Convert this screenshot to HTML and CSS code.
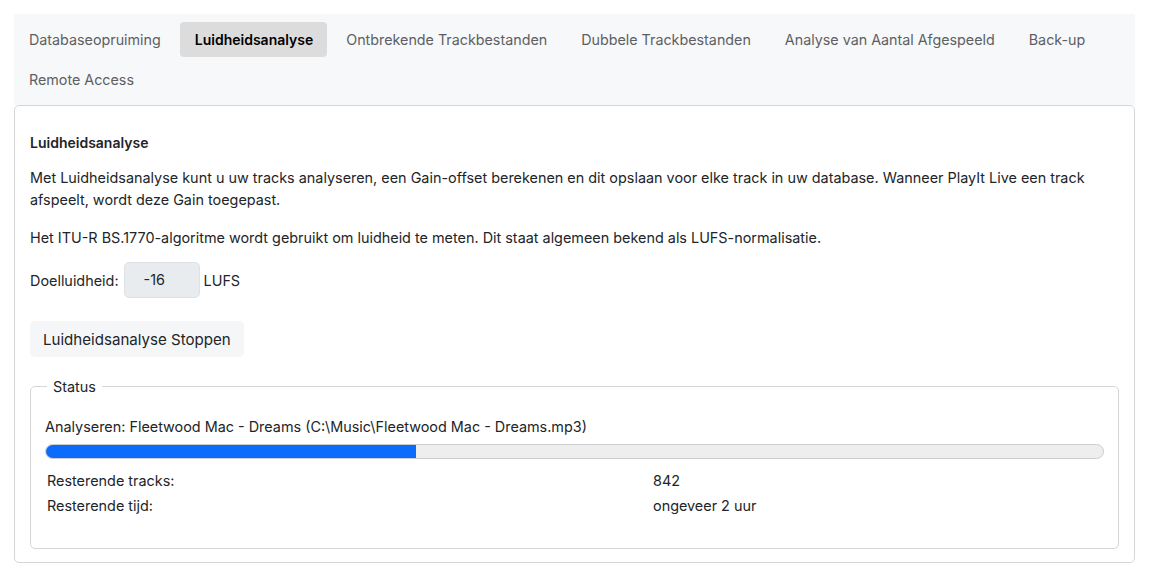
FILE: index.html
```html
<!DOCTYPE html>
<html lang="nl">
<head>
<meta charset="utf-8">
<title>Luidheidsanalyse</title>
<link rel="stylesheet" href="styles.css">
</head>
<body>
<div class="page">
  <nav class="tabs">
    <a class="tab">Databaseopruiming</a>
    <a class="tab active">Luidheidsanalyse</a>
    <a class="tab">Ontbrekende Trackbestanden</a>
    <a class="tab">Dubbele Trackbestanden</a>
    <a class="tab">Analyse van Aantal Afgespeeld</a>
    <a class="tab">Back-up</a>
    <a class="tab">Remote Access</a>
  </nav>
  <section class="card">
    <h2 class="title">Luidheidsanalyse</h2>
    <p class="text">Met Luidheidsanalyse kunt u uw tracks analyseren, een Gain-offset berekenen en dit opslaan voor elke track in uw database. Wanneer PlayIt Live een track afspeelt, wordt deze Gain toegepast.</p>
    <p class="text">Het ITU-R BS.1770-algoritme wordt gebruikt om luidheid te meten. Dit staat algemeen bekend als LUFS-normalisatie.</p>
    <div class="target">
      <label class="target-label">Doelluidheid:</label>
      <span class="input">-16</span>
      <span class="unit">LUFS</span>
    </div>
    <button class="btn">Luidheidsanalyse Stoppen</button>
    <fieldset class="status">
      <legend class="legend">Status</legend>
      <div class="current">Analyseren: Fleetwood Mac - Dreams (C:\Music\Fleetwood Mac - Dreams.mp3)</div>
      <div class="progress"><div class="bar" style="width:35%"></div></div>
      <div class="stats">
        <span>Resterende tracks:</span><span>842</span>
        <span>Resterende tijd:</span><span>ongeveer 2 uur</span>
      </div>
    </fieldset>
  </section>
</div>
</body>
</html>
```

FILE: styles.css
```css
* { box-sizing: border-box; }
html, body { margin: 0; background: #fff; }
body {
  font-family: Inter, "Noto Sans", sans-serif;
  font-size: 14.4px;
  color: #212529;
}
.page {
  padding: 14px 15px 0 14px;
}
.tabs {
  background: #f7f8fa;
  display: flex;
  flex-wrap: wrap;
  gap: 5px 4px;
  padding: 8px 0 8px 0;
}
.tab {
  display: block;
  height: 35px;
  line-height: 35px;
  padding: 0 15px;
  color: #5d5f63;
  font-size: 14.3px;
  border-radius: 4px;
  white-space: nowrap;
}
.tab.active {
  background: #dcdcdc;
  color: #000;
  font-size: 14px;
  font-weight: 600;
  padding: 0 14px 0 15px;
}
.card {
  border: 1px solid #d6d6d6;
  border-radius: 5px;
  padding: 26px 15px 13px 15px;
}
.title {
  margin: 0 0 13px;
  font-size: 14px;
  font-weight: 600;
  line-height: 22px;
}
.text {
  margin: 0 0 16px;
  font-size: 14.4px;
  line-height: 22px;
}
.target {
  display: flex;
  align-items: center;
  gap: 5px;
  margin-top: -3px;
}
.input {
  width: 76px;
  height: 36px;
  background: #e9ecef;
  border: 1px solid #dee2e6;
  border-radius: 5px;
  line-height: 34px;
  padding-left: 19px;
}
.unit { margin-left: -1px; }
.btn {
  display: block;
  margin-top: 23px;
  height: 36px;
  padding: 0 13px;
  border: 0;
  border-radius: 5px;
  background: #f5f6f8;
  font-family: inherit;
  font-size: 15.1px;
  color: #212529;
}
.status {
  margin: 21px 0 0;
  border: 1px solid #d6d6d6;
  border-radius: 5px;
  padding: 21px 14px 31px 14px;
}
.legend {
  padding: 0 6px;
  margin-left: 2px;
}
.current {
  line-height: 22px;
}
.progress {
  margin-top: 6px;
  height: 15px;
  background: #eeeeee;
  border: 1px solid #cccccc;
  border-radius: 8px;
  overflow: hidden;
}
.bar {
  height: 100%;
  background: #0b6cfb;
}
.stats {
  display: grid;
  grid-template-columns: 606px 1fr;
  row-gap: 3px;
  padding: 11px 2px 0;
  line-height: 22px;
}
```
